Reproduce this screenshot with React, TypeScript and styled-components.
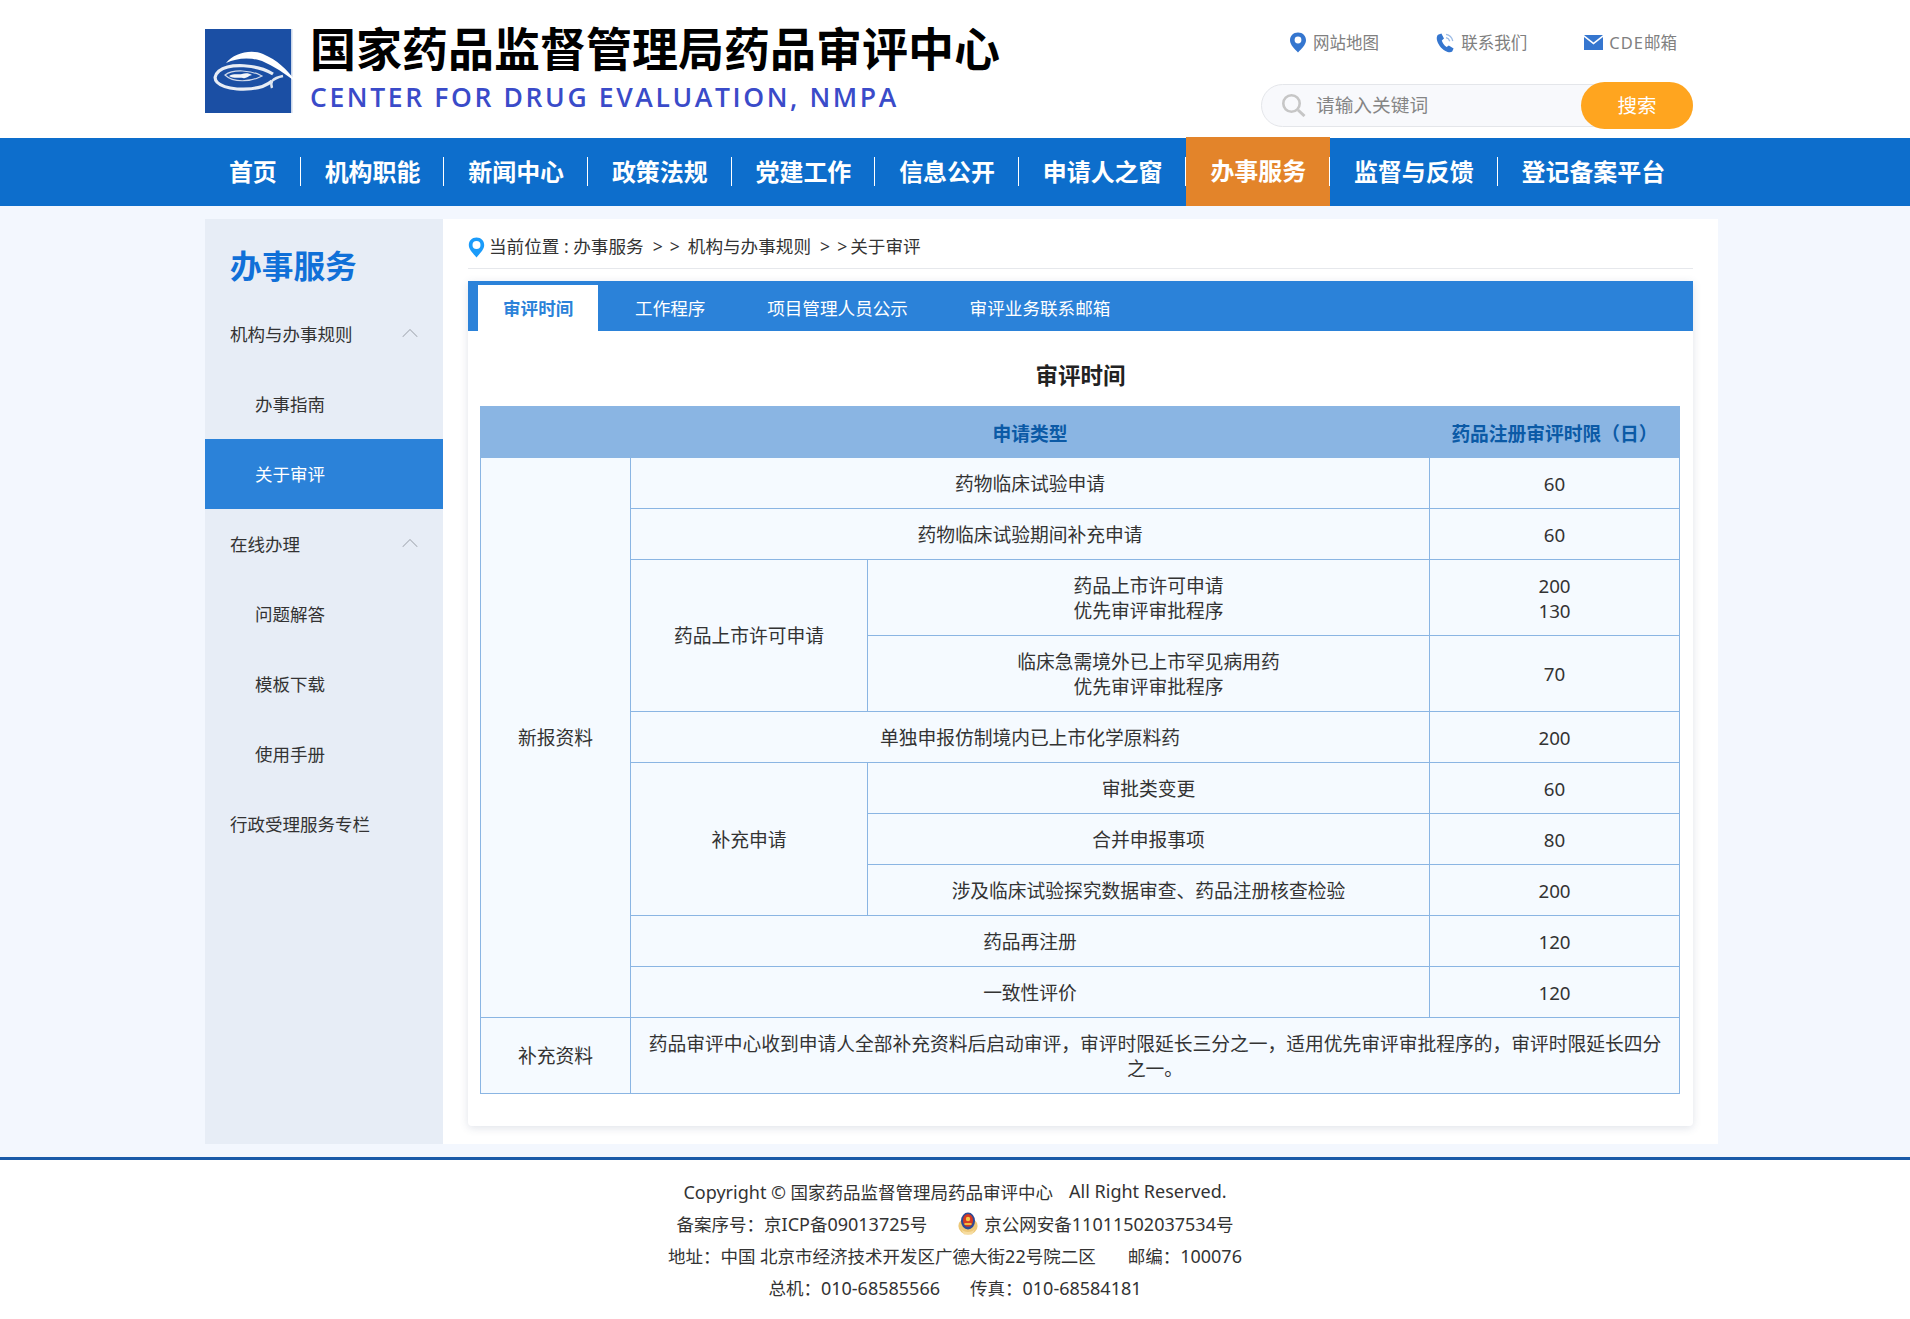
import React from 'react';
import styled, { createGlobalStyle } from 'styled-components';
import { ChevronUp } from 'lucide-react';

const FONT = '"Noto Sans", "Noto Sans CJK SC", sans-serif';

const GlobalStyle = createGlobalStyle`
    html, body {
        margin: 0;
        padding: 0;
        background: #fff;
        font-family: ${FONT};
        color: #333;
    }
`;

const navItems = ['首页', '机构职能', '新闻中心', '政策法规', '党建工作', '信息公开', '申请人之窗', '办事服务', '监督与反馈', '登记备案平台'];
const tabs = ['审评时间', '工作程序', '项目管理人员公示', '审评业务联系邮箱'];

const LogoMark = () => (
    <LogoSvg viewBox="0 0 96 84" width="96" height="84">
        <defs>
            <filter id="soft">
                <feGaussianBlur stdDeviation="0.5" />
            </filter>
        </defs>
        <rect width="86" height="84" fill="#1b4fa4" />
        <rect x="86" width="1.5" height="84" fill="#c9d6ea" />
        <g filter="url(#soft)">
            <path d="M21 34 C29 24 46 20 58 25 C72 31 82 40 91 53 C79 44 69 37 57 32 C44 28 32 29 21 34Z" fill="#fff" />
            <path d="M68 45 C52 35 24 34 14 42 C5 50 12 58 32 60 C48 61 60 58 67 52" fill="none" stroke="#e8edf5" strokeWidth="3.2" />
            <path d="M67 52 C70 49 73 48 78 47 M67 52 C66 54 66 56 67 59" fill="none" stroke="#dfe6f0" strokeWidth="2.4" />
            <path d="M20 46 C28 40 46 41 57 47 C46 53 28 54 20 46Z" fill="none" stroke="#cfd9ea" strokeWidth="1.2" />
            <path d="M24 47 C29 44 34 46 37 45 C40 44 44 44 47 46 C43 47 41 50 38 49 C34 48 29 50 24 47Z" fill="#f4f6fa" />
        </g>
    </LogoSvg>
);

const PinIcon = () => (
    <svg width="18" height="21" viewBox="0 0 18 21">
        <path d="M9 0.5 C4.2 0.5 1 4 1 8.2 C1 12.8 5.6 16.6 9 20.5 C12.4 16.6 17 12.8 17 8.2 C17 4 13.8 0.5 9 0.5Z" fill="#3576cf" />
        <circle cx="9" cy="8" r="3.4" fill="#fff" />
    </svg>
);

const PhoneIcon = () => (
    <svg width="19" height="20" viewBox="0 0 19 20">
        <path d="M2 1.8 L5.4 0.6 L8 5.6 L5.8 7.4 C6.4 9.6 8.2 12.4 10.6 14 L12.8 12.6 L17.6 15.6 L16.2 18.6 C14.8 19.8 12 19.6 9.4 18 C5 15.4 1.6 10.8 0.8 6.2 C0.6 4.4 1 2.8 2 1.8Z" fill="#3576cf" />
        <path d="M10 1.4 C13.4 2 16 4.6 16.8 8 M10 4.6 C11.8 5 13.2 6.4 13.8 8.2" fill="none" stroke="#9dbce6" strokeWidth="1.3" />
    </svg>
);

const MailIcon = () => (
    <svg width="19" height="15" viewBox="0 0 19 15">
        <path d="M0 0 H19 L9.5 7.4Z" fill="#3576cf" />
        <path d="M0 2 L9.5 9.6 L19 2 V15 H0Z" fill="#3576cf" />
    </svg>
);

const SearchIcon = () => (
    <SearchSvg width="26" height="23" viewBox="0 0 26 23">
        <circle cx="10.5" cy="9.5" r="8.2" fill="none" stroke="#c6c6c6" strokeWidth="2.6" />
        <path d="M17 16 L23.5 22" stroke="#c6c6c6" strokeWidth="3" />
    </SearchSvg>
);

const CrumbPin = () => (
    <CrumbSvg width="17" height="21" viewBox="0 0 17 21">
        <path d="M8.5 0.5 C3.9 0.5 0.8 3.9 0.8 8 C0.8 12.6 5.2 16.4 8.5 20.5 C11.8 16.4 16.2 12.6 16.2 8 C16.2 3.9 13.1 0.5 8.5 0.5Z" fill="#1a9bfa" />
        <circle cx="8.5" cy="8" r="4" fill="#fff" />
    </CrumbSvg>
);

const Emblem = () => (
    <svg width="20" height="23" viewBox="0 0 20 23">
        <ellipse cx="10" cy="14" rx="9.6" ry="8.6" fill="#edc878" />
        <ellipse cx="10" cy="9" rx="7" ry="8.4" fill="#2c4a96" />
        <ellipse cx="10" cy="8.4" rx="5" ry="6.4" fill="#d63a22" />
        <circle cx="10" cy="7" r="2.2" fill="#f3c64a" />
        <path d="M6.5 11 H13.5 V13 H6.5Z" fill="#f0b93e" />
        <path d="M3 17 C6 21 14 21 17 17 L14 22.5 H6Z" fill="#f6dca0" />
    </svg>
);

const App: React.FC = () => (
    <>
        <GlobalStyle />
        <Header>
            <Brand>
                <LogoMark />
                <BrandText>
                    <BrandTitle>国家药品监督管理局药品审评中心</BrandTitle>
                    <BrandSub>CENTER FOR DRUG EVALUATION, NMPA</BrandSub>
                </BrandText>
            </Brand>
            <Tools>
                <TopLinks>
                    <TopLink><PinIcon />网站地图</TopLink>
                    <TopLink><PhoneIcon />联系我们</TopLink>
                    <TopLink><MailIcon /><span><Spaced>CDE</Spaced>邮箱</span></TopLink>
                </TopLinks>
                <SearchBox>
                    <SearchIcon />
                    <SearchInput placeholder="请输入关键词" />
                    <SearchButton>搜索</SearchButton>
                </SearchBox>
            </Tools>
        </Header>

        <Nav>
            <NavInner>
                {navItems.map((item, i) => (
                    <NavItem key={item} $active={item === '办事服务'} $last={i === navItems.length - 1}>
                        {item}
                    </NavItem>
                ))}
            </NavInner>
        </Nav>

        <Main>
            <MainBody>
                <Sidebar>
                    <SideTitle>办事服务</SideTitle>
                    <SideItem>机构与办事规则<ChevronUp size={28} strokeWidth={0.9} color="#a9aeb6" /></SideItem>
                    <SideItem $sub>办事指南</SideItem>
                    <SideItem $sub $active>关于审评</SideItem>
                    <SideItem>在线办理<ChevronUp size={28} strokeWidth={0.9} color="#a9aeb6" /></SideItem>
                    <SideItem $sub>问题解答</SideItem>
                    <SideItem $sub>模板下载</SideItem>
                    <SideItem $sub>使用手册</SideItem>
                    <SideItem>行政受理服务专栏</SideItem>
                </Sidebar>

                <Content>
                    <Breadcrumb>
                        <CrumbPin />
                        当前位置 : 办事服务<CrumbArrows>&gt; &gt;</CrumbArrows>机构与办事规则<CrumbArrows $tight>&gt; &gt;</CrumbArrows>关于审评
                    </Breadcrumb>

                    <Panel>
                        <TabBar>
                            {tabs.map((tab, i) => (
                                <Tab key={tab} $active={i === 0}>{tab}</Tab>
                            ))}
                        </TabBar>
                        <PanelTitle>审评时间</PanelTitle>
                        <ReviewTable>
                            <colgroup>
                                <col width="150" />
                                <col width="237" />
                                <col width="562" />
                                <col width="250" />
                            </colgroup>
                            <thead>
                                <tr>
                                    <HeadCell />
                                    <HeadCell colSpan={2}>申请类型</HeadCell>
                                    <HeadCell>药品注册审评时限（日）</HeadCell>
                                </tr>
                            </thead>
                            <tbody>
                                <tr>
                                    <Cell rowSpan={10}>新报资料</Cell>
                                    <Cell colSpan={2}>药物临床试验申请</Cell>
                                    <Cell>60</Cell>
                                </tr>
                                <tr>
                                    <Cell colSpan={2}>药物临床试验期间补充申请</Cell>
                                    <Cell>60</Cell>
                                </tr>
                                <tr>
                                    <Cell rowSpan={2}>药品上市许可申请</Cell>
                                    <Cell>药品上市许可申请<br />优先审评审批程序</Cell>
                                    <Cell>200<br />130</Cell>
                                </tr>
                                <tr>
                                    <Cell>临床急需境外已上市罕见病用药<br />优先审评审批程序</Cell>
                                    <Cell>70</Cell>
                                </tr>
                                <tr>
                                    <Cell colSpan={2}>单独申报仿制境内已上市化学原料药</Cell>
                                    <Cell>200</Cell>
                                </tr>
                                <tr>
                                    <Cell rowSpan={3}>补充申请</Cell>
                                    <Cell>审批类变更</Cell>
                                    <Cell>60</Cell>
                                </tr>
                                <tr>
                                    <Cell>合并申报事项</Cell>
                                    <Cell>80</Cell>
                                </tr>
                                <tr>
                                    <Cell>涉及临床试验探究数据审查、药品注册核查检验</Cell>
                                    <Cell>200</Cell>
                                </tr>
                                <tr>
                                    <Cell colSpan={2}>药品再注册</Cell>
                                    <Cell>120</Cell>
                                </tr>
                                <tr>
                                    <Cell colSpan={2}>一致性评价</Cell>
                                    <Cell>120</Cell>
                                </tr>
                                <tr>
                                    <Cell>补充资料</Cell>
                                    <Cell colSpan={3}>
                                        药品审评中心收到申请人全部补充资料后启动审评，审评时限延长三分之一，适用优先审评审批程序的，审评时限延长四分之一。
                                    </Cell>
                                </tr>
                            </tbody>
                        </ReviewTable>
                    </Panel>
                </Content>
            </MainBody>
        </Main>

        <Footer>
            <FooterLine $gap={16}>
                <span><Latin>Copyright ©</Latin> 国家药品监督管理局药品审评中心</span>
                <Latin>All Right Reserved.</Latin>
            </FooterLine>
            <FooterLine $gap={31}>
                <span>备案序号：京<Latin>ICP</Latin>备<Latin>09013725</Latin>号</span>
                <Police><Emblem /><span>京公网安备<Latin>11011502037534</Latin>号</span></Police>
            </FooterLine>
            <FooterLine $gap={32}>
                <span>地址：中国 北京市经济技术开发区广德大街<Latin>22</Latin>号院二区</span>
                <span>邮编：<Latin>100076</Latin></span>
            </FooterLine>
            <FooterLine $gap={30}>
                <span>总机：<Latin>010-68585566</Latin></span>
                <span>传真：<Latin>010-68584181</Latin></span>
            </FooterLine>
        </Footer>
    </>
);

export default App;

const Header = styled.header`
    width: 1487px;
    height: 138px;
    margin-left: 205px;
    display: flex;
    justify-content: space-between;
`;

const Brand = styled.div`
    display: flex;
    align-items: flex-start;
    padding-top: 29px;
`;

const LogoSvg = styled.svg`
    display: block;
    margin-right: 9px;
`;

const BrandText = styled.div`
    display: flex;
    flex-direction: column;
    margin-top: -10px;
`;

const BrandTitle = styled.div`
    font-family: "Noto Sans CJK SC", sans-serif;
    font-size: 46px;
    font-weight: 700;
    line-height: 54px;
    color: #000;
    white-space: nowrap;
`;

const BrandSub = styled.div`
    font-family: "Open Sans", sans-serif;
    font-size: 26.5px;
    font-weight: 600;
    line-height: 36px;
    margin-top: 6px;
    letter-spacing: 2.62px;
    color: #3a4bc9;
    white-space: nowrap;
`;

const Tools = styled.div`
    width: 431px;
    display: flex;
    flex-direction: column;
    align-items: flex-end;
`;

const TopLinks = styled.div`
    display: flex;
    width: 402px;
    margin-top: 32px;
    margin-right: -1px;
    height: 21px;
    justify-content: space-between;
    padding-right: 16px;
    box-sizing: border-box;
`;

const TopLink = styled.a`
    display: flex;
    align-items: center;
    gap: 6px;
    margin-left: -2px;
    font-size: 16.5px;
    line-height: 21px;
    color: #808080;
    white-space: nowrap;
`;

const Spaced = styled.span`
    letter-spacing: 1px;
`;

const SearchBox = styled.div`
    position: relative;
    width: 432px;
    height: 43px;
    margin-top: 31px;
    margin-right: -1px;
    box-sizing: border-box;
    display: flex;
    align-items: center;
    padding-left: 19px;
    background: #f8f9fc;
    border: 1px solid #e4e6ea;
    border-radius: 22px;
`;

const SearchSvg = styled.svg`
    flex: none;
    margin-right: 8px;
`;

const SearchInput = styled.input`
    flex: 1;
    min-width: 0;
    padding: 0 0 2px 1px;
    border: 0;
    outline: 0;
    background: transparent;
    font-family: ${FONT};
    font-size: 18.7px;
    color: #333;

    &::placeholder {
        color: #858585;
        opacity: 1;
    }
`;

const SearchButton = styled.button`
    width: 112px;
    height: 47px;
    flex: none;
    margin-right: -1px;
    padding: 0 0 2px;
    border: 0;
    border-radius: 24px;
    background: #ffa51f;
    color: #fff;
    font-family: ${FONT};
    font-size: 19.5px;
`;

const Nav = styled.nav`
    height: 68px;
    background: #0d6ecc;
`;

const NavInner = styled.div`
    margin-left: 205px;
    height: 100%;
    display: flex;
`;

const NavItem = styled.a<{ $active?: boolean; $last?: boolean }>`
    position: relative;
    display: flex;
    align-items: center;
    padding: 0 23.95px 4px;
    margin-top: ${(p) => (p.$active ? '-1px' : '0')};
    background: ${(p) => (p.$active ? '#e3842a' : 'transparent')};
    font-family: "Noto Sans CJK SC", sans-serif;
    font-size: 23.95px;
    font-weight: 700;
    color: #fff;
    white-space: nowrap;

    &::after {
        content: '';
        display: ${(p) => (p.$last ? 'none' : 'block')};
        position: absolute;
        right: 0;
        top: ${(p) => (p.$active ? '20px' : '19px')};
        width: 1px;
        height: 29px;
        background: #fff;
    }
`;

const Main = styled.main`
    background: #f3f7fe;
    padding: 13px 0;
`;

const MainBody = styled.div`
    width: 1513px;
    margin-left: 205px;
    display: flex;
`;

const Sidebar = styled.aside`
    width: 238px;
    flex: none;
    background: #e7edf6;
`;

const SideTitle = styled.div`
    height: 80px;
    padding: 9px 0 0 25px;
    box-sizing: border-box;
    display: flex;
    align-items: center;
    font-family: "Noto Sans CJK SC", sans-serif;
    font-size: 31.7px;
    font-weight: 700;
    color: #1070d8;
`;

const SideItem = styled.a<{ $sub?: boolean; $active?: boolean }>`
    height: 70px;
    padding: 0 19px 2px ${(p) => (p.$sub ? '50px' : '25px')};
    box-sizing: border-box;
    display: flex;
    align-items: center;
    justify-content: space-between;
    font-size: 17.5px;
    color: ${(p) => (p.$active ? '#fff' : '#333')};
    background: ${(p) => (p.$active ? '#2b82d9' : 'transparent')};
`;

const Content = styled.section`
    flex: 1;
    padding: 0 25px 18px;
    background: #fff;
`;

const Breadcrumb = styled.div`
    height: 50px;
    padding-top: 18px;
    box-sizing: border-box;
    font-size: 17.6px;
    line-height: 19px;
    border-bottom: 1px solid #e6e8ec;
    margin-bottom: 12px;
    white-space: nowrap;
`;

const CrumbArrows = styled.span<{ $tight?: boolean }>`
    margin: 0 ${(p) => (p.$tight ? '3px' : '8px')} 0 9px;
    word-spacing: 2.5px;
`;

const CrumbSvg = styled.svg`
    margin-right: 4px;
    vertical-align: -5px;
`;

const Panel = styled.div`
    padding-bottom: 32px;
    background: #fff;
    border-radius: 0 0 4px 4px;
    box-shadow: 0 2px 9px rgba(60, 80, 120, 0.16);
`;

const TabBar = styled.div`
    height: 50px;
    box-sizing: border-box;
    padding: 4px 0 0 10px;
    display: flex;
    background: #2b82d9;
`;

const Tab = styled.a<{ $active?: boolean }>`
    padding: 0 25px 2px;
    margin-right: 11.7px;
    display: flex;
    align-items: center;
    font-size: 17.6px;
    font-weight: ${(p) => (p.$active ? 700 : 400)};
    color: ${(p) => (p.$active ? '#2b82d9' : '#fff')};
    background: ${(p) => (p.$active ? '#fff' : 'transparent')};
`;

const PanelTitle = styled.div`
    height: 75px;
    padding-top: 12px;
    box-sizing: border-box;
    display: flex;
    align-items: center;
    justify-content: center;
    font-size: 22.5px;
    font-weight: 700;
    color: #222;
`;

const ReviewTable = styled.table`
    width: 1199px;
    margin-left: 12px;
    table-layout: fixed;
    border-collapse: collapse;
    font-size: 18.75px;
    text-align: center;
`;

const HeadCell = styled.th`
    height: 51px;
    padding: 0;
    box-sizing: border-box;
    background: #8ab5e3;
    border: 1px solid #8ab5e3;
    color: #0b5aa6;
    font-size: 18.75px;
    font-weight: 700;
`;

const Cell = styled.td`
    padding: 12.5px 16px;
    line-height: 25px;
    background: #f5faff;
    border: 1px solid #8ab5e3;
    color: #333;
`;

const Footer = styled.footer`
    height: 140px;
    padding-top: 15px;
    box-sizing: border-box;
    overflow: hidden;
    border-top: 3px solid #1a5aa8;
    font-size: 17.5px;
    color: #333;
`;

const FooterLine = styled.div<{ $gap: number }>`
    height: 32px;
    display: flex;
    justify-content: center;
    align-items: center;
    gap: ${(p) => p.$gap}px;
    white-space: nowrap;
`;

const Latin = styled.span`
    font-size: 18px;
`;

const Police = styled.span`
    display: flex;
    align-items: center;
    gap: 6px;
`;
